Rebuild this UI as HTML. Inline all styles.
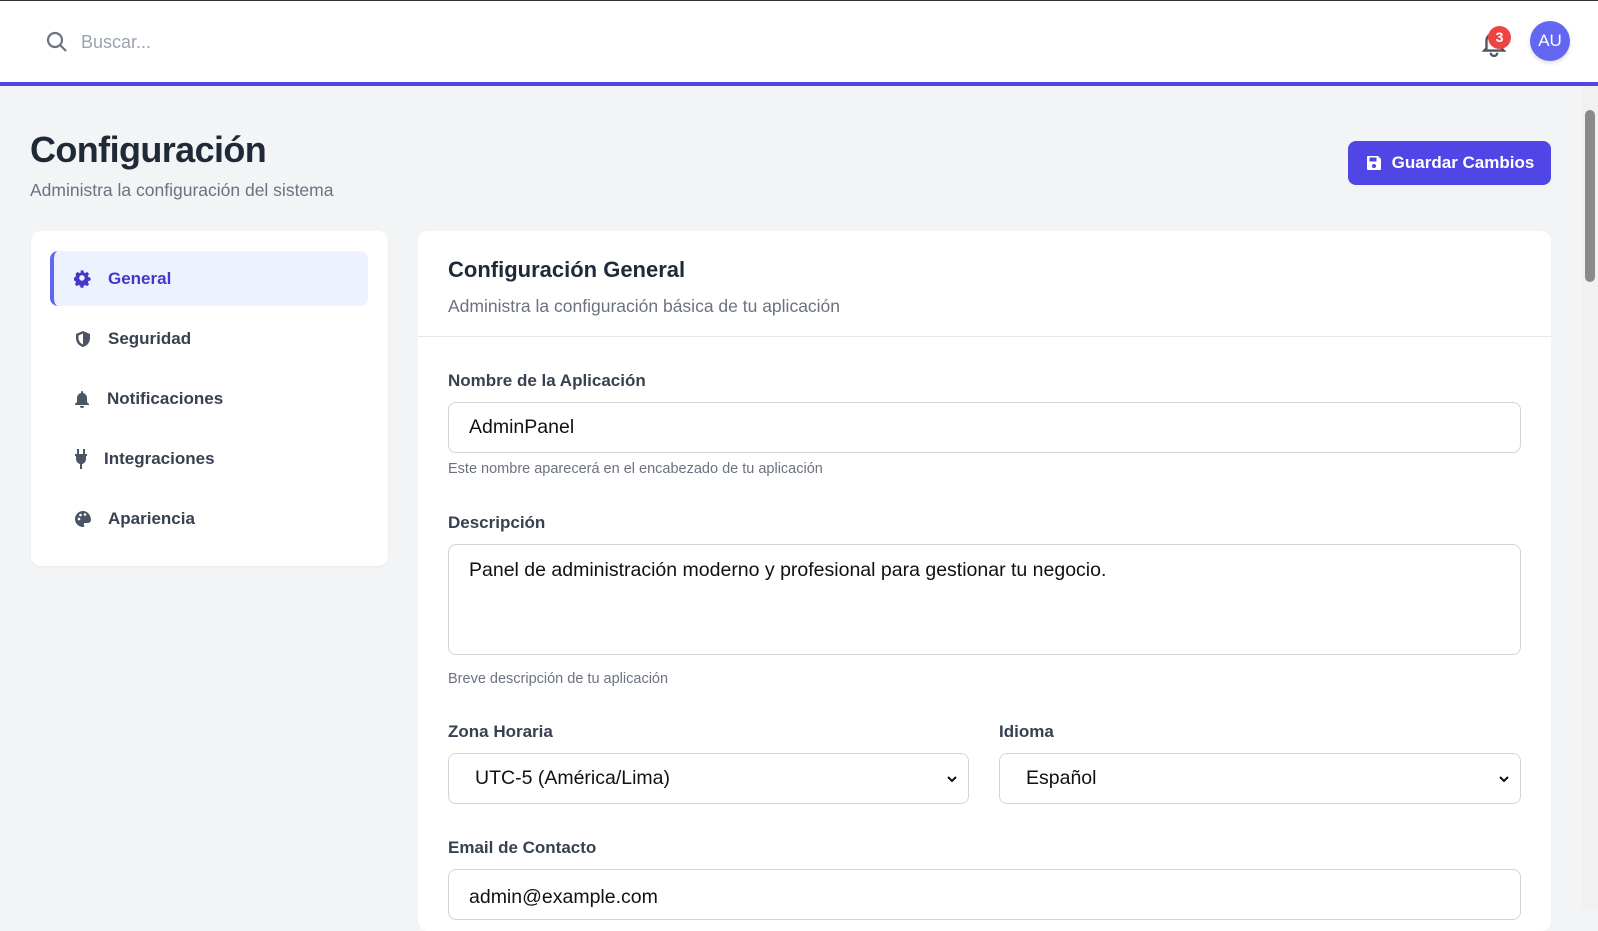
<!DOCTYPE html>
<html><head><meta charset="utf-8"><style>
*{box-sizing:border-box;margin:0;padding:0}
body{width:1598px;height:910px;overflow:hidden;font-family:"Liberation Sans",sans-serif;background:#f3f4f6;color:#374151;position:relative}
.top{position:absolute;left:0;top:0;width:1598px;height:86px;background:#fff;border-top:1px solid #333;border-bottom:4px solid #4f46e5}
.sb{position:absolute;right:0;top:86px;width:16px;height:824px;background:#f1f1f1}
.sb .th{position:absolute;left:3px;top:24px;width:10px;height:172px;background:#8a8a8a;border-radius:5px}
.abs{position:absolute}
h1{position:absolute;left:30px;top:129px;font-size:36px;font-weight:bold;color:#1f2937;letter-spacing:-.6px}
.sub{position:absolute;left:30px;top:180px;font-size:17.5px;color:#6b7280}
.btn{position:absolute;left:1348px;top:141px;width:203px;height:44px;background:#4f46e5;border-radius:8px;color:#fff;font-weight:bold;font-size:17px;display:flex;align-items:center;justify-content:center;gap:9px}
.side{position:absolute;left:31px;top:231px;width:357px;height:335px;background:#fff;border-radius:10px;box-shadow:0 1px 2px rgba(0,0,0,.05)}
.it{position:absolute;left:19px;width:318px;height:55px;display:flex;align-items:center;padding-left:24px;gap:16px;font-size:17px;font-weight:bold;color:#374151}
.it.a{background:#eef2ff;border-left:4px solid #6366f1;border-radius:8px;color:#4338ca;padding-left:20px}
.main{position:absolute;left:418px;top:231px;width:1133px;height:700px;background:#fff;border-radius:10px}
.lbl{position:absolute;left:30px;font-size:17px;font-weight:bold;color:#374151}
.inp{position:absolute;left:30px;width:1073px;height:51px;border:1px solid #d1d5db;border-radius:8px;font-size:19.5px;color:#111;padding:0 20px;display:flex;align-items:center}
.help{position:absolute;left:30px;font-size:14.5px;color:#6b7280}
</style></head><body>
<div class="top">
<svg class="abs" style="left:45px;top:29px" width="24" height="24" viewBox="0 0 24 24" fill="none" stroke="#6b7280" stroke-width="2.2"><circle cx="10" cy="10" r="7"/><path d="M15.5 15.5L21 21"/></svg>
<div class="abs" style="left:81px;top:31px;font-size:18px;color:#9ca3af">Buscar...</div>
<svg class="abs" style="left:1481px;top:28px" width="26" height="28" viewBox="0 0 24 26" fill="none" stroke="#4b5563" stroke-width="2.2"><path d="M5 18V11a7 7 0 0114 0v7l2 2H3z"/><path d="M9 22a3 3 0 006 0"/></svg>
<div class="abs" style="left:1488px;top:25px;width:23px;height:23px;border-radius:50%;background:#ef4444;color:#fff;font-size:14px;font-weight:bold;text-align:center;line-height:23px">3</div>
<div class="abs" style="left:1530px;top:20px;width:40px;height:40px;border-radius:50%;background:#6366f1;color:#fff;font-size:17px;text-align:center;line-height:40px;box-shadow:0 2px 4px rgba(0,0,0,.15)">AU</div>
</div>
<div class="sb"><div class="th"></div></div>
<h1>Configuración</h1>
<div class="sub">Administra la configuración del sistema</div>
<div class="btn"><svg width="18" height="18" viewBox="0 0 18 18"><path d="M2 3a1 1 0 011-1h10l3 3v10a1 1 0 01-1 1H3a1 1 0 01-1-1z" fill="#fff"/><rect x="4.5" y="3.5" width="7" height="4" fill="#4f46e5"/><circle cx="9" cy="12" r="2" fill="#4f46e5"/></svg>Guardar Cambios</div>
<div class="side">
<div class="it a" style="top:20px"><svg width="18" height="18" viewBox="0 0 24 24"><path fill="#4338ca" d="M10 1h4l.6 3 2.3 1 2.6-1.7 2.8 2.8L20.6 8.7l1 2.3 3 .6v4l-3 .6-1 2.3 1.7 2.6-2.8 2.8-2.6-1.7-2.3 1-.6 3h-4l-.6-3-2.3-1-2.6 1.7-2.8-2.8 1.7-2.6-1-2.3-3-.6v-4l3-.6 1-2.3L2.8 6.1l2.8-2.8 2.6 1.7 2.3-1zM12 8a4 4 0 100 8 4 4 0 000-8z" transform="scale(.92) translate(-.5 -.5)"/></svg>General</div>
<div class="it" style="top:80px"><svg width="18" height="18" viewBox="0 0 18 18"><path d="M9 1L2 4v4c0 4.5 3 8 7 9 4-1 7-4.5 7-9V4z" fill="#4b5563"/><path d="M9 3.5v11c-2.6-1-4.5-3.5-4.5-6.5V5.5z" fill="#fff"/></svg>Seguridad</div>
<div class="it" style="top:140px;padding-left:23px"><svg width="18" height="18" viewBox="0 0 18 18"><path d="M9 1a1 1 0 011 1v1a5 5 0 014 5v4l2 2v1H2v-1l2-2V8a5 5 0 014-5V2a1 1 0 011-1zM7 16h4a2 2 0 01-4 0z" fill="#4b5563"/></svg>Notificaciones</div>
<div class="it" style="top:200px;padding-left:24px"><svg width="14" height="20" viewBox="0 0 14 20"><path d="M3 0h2v5h4V0h2v5h2v2h-1v3a5 5 0 01-4 5v5H6v-5a5 5 0 01-4-5V7H1V5h2z" fill="#4b5563"/></svg>Integraciones</div>
<div class="it" style="top:260px"><svg width="18" height="18" viewBox="0 0 18 18"><path d="M9 1a8 8 0 100 16c1.2 0 1.6-1 1-2-.6-1 0-2 1.2-2H14a3 3 0 003-3c0-5-3.6-9-8-9z" fill="#4b5563"/><circle cx="5" cy="9" r="1.3" fill="#fff"/><circle cx="6.5" cy="5" r="1.3" fill="#fff"/><circle cx="11" cy="4.5" r="1.3" fill="#fff"/></svg>Apariencia</div>
</div>
<div class="main">
<div class="abs" style="left:30px;top:26px;font-size:22px;font-weight:bold;color:#1f2937">Configuración General</div>
<div class="abs" style="left:30px;top:65px;font-size:17.5px;color:#6b7280">Administra la configuración básica de tu aplicación</div>
<div class="abs" style="left:0;top:105px;width:100%;height:1px;background:#e5e7eb"></div>
<div class="lbl" style="top:140px">Nombre de la Aplicación</div>
<div class="inp" style="top:171px">AdminPanel</div>
<div class="help" style="top:230px">Este nombre aparecerá en el encabezado de tu aplicación</div>
<div class="lbl" style="top:282px">Descripción</div>
<div class="inp" style="top:313px;height:111px;align-items:flex-start;padding-top:14px">Panel de administración moderno y profesional para gestionar tu negocio.</div>
<div class="help" style="top:440px">Breve descripción de tu aplicación</div>
<div class="lbl" style="top:491px">Zona Horaria</div>
<div class="inp" style="top:522px;width:521px;padding-left:26px">UTC-5 (América/Lima)<svg class="abs" style="right:10px;top:20px" width="12" height="10" viewBox="0 0 12 10" fill="none" stroke="#111" stroke-width="2"><path d="M2 3l4 4 4-4"/></svg></div>
<div class="lbl" style="top:491px;left:581px">Idioma</div>
<div class="inp" style="top:522px;left:581px;width:522px;padding-left:26px">Español<svg class="abs" style="right:10px;top:20px" width="12" height="10" viewBox="0 0 12 10" fill="none" stroke="#111" stroke-width="2"><path d="M2 3l4 4 4-4"/></svg></div>
<div class="lbl" style="top:607px">Email de Contacto</div>
<div class="inp" style="top:638px;align-items:flex-start;padding-top:16px">admin@example.com</div>
</div>
</body></html>
